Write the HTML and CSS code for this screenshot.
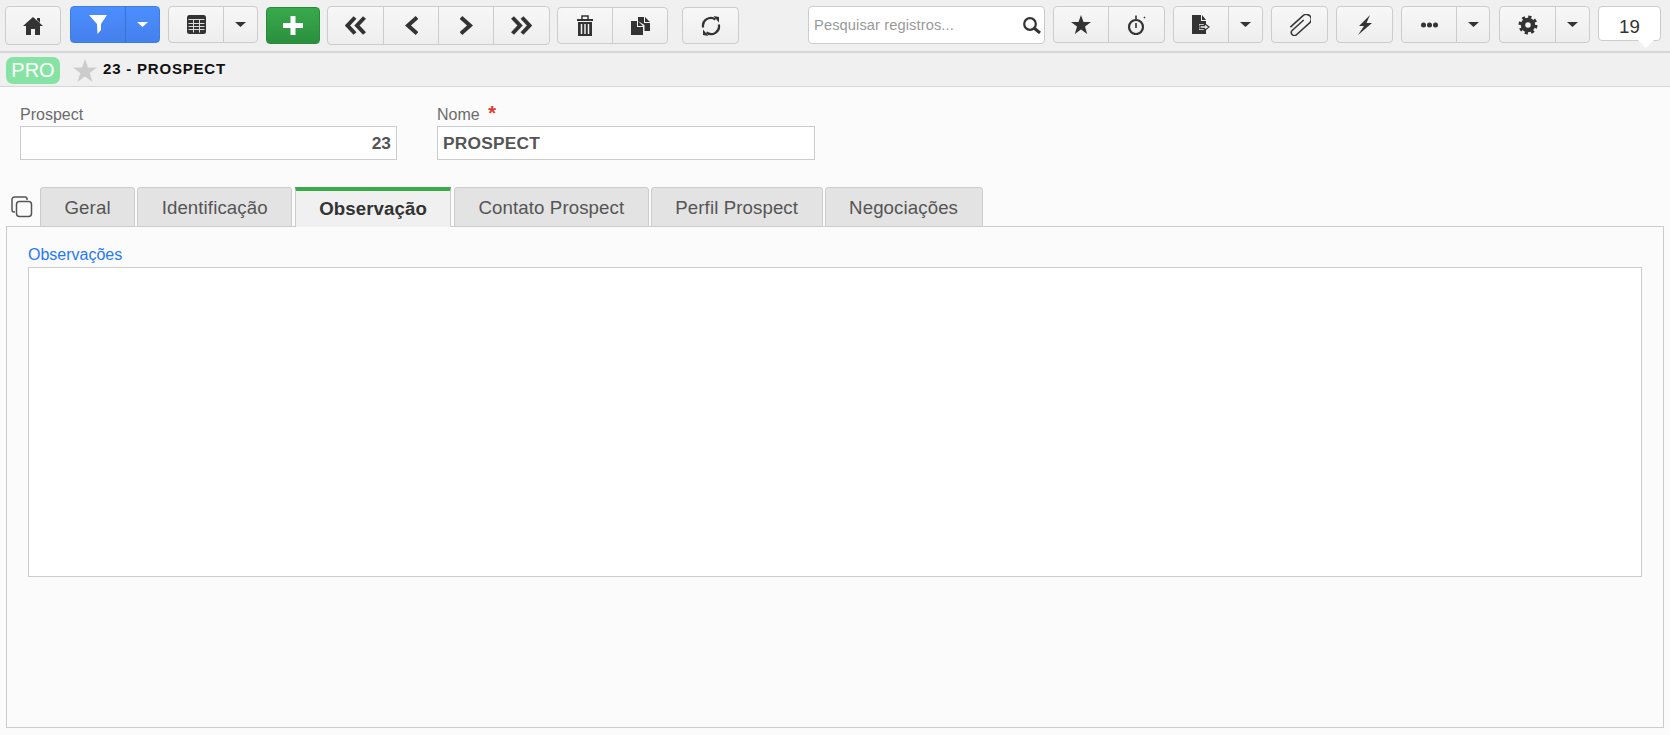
FILE: index.html
```html
<!DOCTYPE html>
<html lang="pt-BR">
<head>
<meta charset="utf-8">
<title>23 - PROSPECT</title>
<link rel="stylesheet" href="styles.css">
</head>
<body>
<header class="toolbar">
  <div class="group tall"><button class="seg w54"><svg width="20" height="18" viewBox="0 0 20 18"><path class="ink" d="M10 0L20 9H17V18H12V12H8V18H3V9H0Z"/><path class="ink" d="M14 1h3v5l-3-3z"/></svg></button></div>
  <div class="group blue g9"><button class="seg w54"><svg width="18" height="19" viewBox="0 0 18 19"><path fill="#fff" d="M0 0H18L12 9V15L8.500 19L8 9Z"/></svg></button><button class="seg w34"><svg width="11" height="5" viewBox="0 0 11 5"><path fill="#fff" d="M0 0H11L5.500 5Z"/></svg></button></div>
  <div class="group"><button class="seg w54"><svg width="19" height="19" viewBox="0 0 19 19"><rect class="ink" width="19" height="19" rx="2.500"/><path stroke="#ddd" fill="none" d="M1.500 4.500H17.500M1.500 8.500H17.500M1.500 11.500H17.500M1.500 14.500H17.500M6.500 4.500V17.500M12.500 4.500V17.500"/></svg></button><button class="seg w34"><svg width="11" height="5" viewBox="0 0 11 5"><path class="ink" d="M0 0H11L5.500 5Z"/></svg></button></div>
  <div class="group green low"><button class="seg w52"><svg width="20" height="19" viewBox="0 0 20 19"><path stroke="#fff" stroke-width="5" d="M10 0V19M0 9.500H20"/></svg></button></div>
  <div class="group tall g7"><button class="seg w55"><svg width="21" height="19" viewBox="0 0 21 19"><path class="line" stroke-width="4" d="M10 1.500L2.500 9.500L10 17.500M19.500 1.500L12 9.500L19.500 17.500"/></svg></button><button class="seg w55"><svg width="13" height="19" viewBox="0 0 13 19"><path class="line" stroke-width="4" d="M12 1.500L3 9.500L12 17.500"/></svg></button><button class="seg w55"><svg width="13" height="19" viewBox="0 0 13 19"><path class="line" stroke-width="4" d="M1 1.500L10 9.500L1 17.500"/></svg></button><button class="seg w56"><svg width="21" height="19" viewBox="0 0 21 19"><path class="line" stroke-width="4" d="M1.500 1.500L9 9.500L1.500 17.500M11 1.500L18.500 9.500L11 17.500"/></svg></button></div>
  <div class="group low g7"><button class="seg w54"><svg width="16" height="21" viewBox="0 0 16 21"><path class="ink" d="M0 4H16V6H0ZM1 7H15V21H1Z"/><path class="line" stroke-width="1.500" d="M5 4V1H11V4"/><path stroke="#eee" stroke-width="1.500" d="M4.500 9V19M8 9V19M11.500 9V19"/></svg></button><button class="seg w55"><svg width="19" height="18" viewBox="0 0 19 18"><path class="ink" d="M7 0H13V6H19V14H13.500V8L7 4ZM14 0L19 5H14ZM0 4H6V10H12V18H0ZM7 4L12 9H7Z"/></svg></button></div>
  <div class="group low g14"><button class="seg w55"><svg width="20" height="20" viewBox="0 0 20 20"><path class="line" stroke-width="2.200" d="M2.200 11.500A7.800 7.800 0 0 1 14.500 3.500M17.800 8.500A7.800 7.800 0 0 1 5.500 16.500"/><path class="ink" d="M12.500 0L18 1V6.500ZM7.500 20L2 19V13.500Z"/></svg></button></div>
  <label class="search"><input class="search-input" type="text" placeholder="Pesquisar registros..."><svg width="18" height="17" viewBox="0 0 18 17"><circle class="line" stroke-width="2.200" cx="7" cy="7" r="5.800"/><path class="line" stroke-width="3" d="M11 11L17 16"/></svg></label>
  <div class="group"><button class="seg w54"><svg width="20" height="19" viewBox="0 0 20 19"><path class="ink" d="M10 0L12.500 7H20L14 11.500L16.200 19L10 14.500L3.800 19L6 11.500L0 7H7.500Z"/></svg></button><button class="seg w56"><svg width="20" height="21" viewBox="0 0 20 21"><circle class="line" stroke-width="2.200" cx="9" cy="13" r="7"/><path class="line" stroke-width="1.600" d="M9 1.500V5M9 9V14M17 3L18 4"/></svg></button></div>
  <div class="group"><button class="seg w54"><svg width="18" height="19" viewBox="0 0 18 19"><path class="ink" d="M0 0H9V6H14V9H7V15H14V19H0ZM10 0L14 5H10Z"/><path fill="none" stroke="#333" stroke-width="1.300" d="M8 10.500H12.500V8.500L17 12L12.500 15.500V13.500H8Z"/></svg></button><button class="seg w34"><svg width="11" height="5" viewBox="0 0 11 5"><path class="ink" d="M0 0H11L5.500 5Z"/></svg></button></div>
  <div class="group"><button class="seg w55"><svg width="22" height="22" viewBox="3 3 18 18"><path class="line" stroke-width="1.200" transform="rotate(48 12 12) translate(2 0)" d="M6 19V5a4 4 0 0 1 8 0V19.500a2.500 2.500 0 0 1-5 0V7"/></svg></button></div>
  <div class="group"><button class="seg w55"><svg width="14" height="20" viewBox="0 0 14 20"><path class="ink" d="M12 0L1 11H6L0 20L14 8H8.500Z"/></svg></button></div>
  <div class="group"><button class="seg w54"><svg width="17" height="6" viewBox="0 0 17 6"><circle class="ink" cx="2.500" cy="3" r="2.500"/><circle class="ink" cx="8.500" cy="3" r="2.500"/><circle class="ink" cx="14.500" cy="3" r="2.500"/></svg></button><button class="seg w33"><svg width="11" height="5" viewBox="0 0 11 5"><path class="ink" d="M0 0H11L5.500 5Z"/></svg></button></div>
  <div class="group g9"><button class="seg w55"><svg width="20" height="20" viewBox="0 0 20 20"><circle class="line" stroke-width="4.500" cx="10" cy="10" r="5"/><circle class="line" stroke-width="3" stroke-dasharray="3.140 3.140" cx="10" cy="10" r="8"/></svg></button><button class="seg w34"><svg width="11" height="5" viewBox="0 0 11 5"><path class="ink" d="M0 0H11L5.500 5Z"/></svg></button></div>
  <div class="counter">19</div>
</header>

<div class="titlebar">
  <span class="badge">PRO</span>
  <svg class="title-star" width="24" height="23" viewBox="0 0 20 19"><path fill="#ccc" d="M10 0L12.500 7H20L14 11.500L16.200 19L10 14.500L3.800 19L6 11.500L0 7H7.500Z"/></svg>
  <span class="title">23 - PROSPECT</span>
</div>

<main class="main">
  <div class="fields">
    <div class="field">
      <label class="field-label">Prospect</label>
      <input class="text-input num" type="text" value="23">
    </div>
    <div class="field">
      <label class="field-label">Nome <span class="req">*</span></label>
      <input class="text-input wide" type="text" value="PROSPECT">
    </div>
  </div>

  <nav class="tabs">
    <svg class="tabs-icon" width="22" height="22" viewBox="0 0 22 22"><rect x="5.500" y="5.500" width="15" height="15" rx="3" fill="none" stroke="#555" stroke-width="1.500"/><path d="M4 16H3A2 2 0 0 1 1 14V3.500A2.500 2.500 0 0 1 3.500 1H14A2 2 0 0 1 16 3V4" fill="none" stroke="#555" stroke-width="1.500"/></svg>
    <div class="tab">Geral</div>
    <div class="tab">Identificação</div>
    <div class="tab active">Observação</div>
    <div class="tab">Contato Prospect</div>
    <div class="tab">Perfil Prospect</div>
    <div class="tab">Negociações</div>
  </nav>

  <section class="panel">
    <label class="panel-label">Observações</label>
    <textarea class="notes"></textarea>
  </section>
</main>
</body>
</html>
```

FILE: styles.css
```css
* { box-sizing: border-box; }
html, body { margin: 0; padding: 0; height: 100%; overflow: hidden; }
body { background: #fbfbfb; font-family: "Liberation Sans", Arial, sans-serif; color: #333; }

.ink { fill: #333; }
.line { fill: none; stroke: #333; }

.toolbar {
  height: 53px;
  padding: 6px 0 0 5px;
  display: flex;
  align-items: flex-start;
  background: #f0f0f0;
  border-bottom: 2px solid #d6d6d6;
}
.group {
  display: flex;
  height: 37px;
  margin-left: 8px;
  border: 1px solid #ccc;
  border-radius: 4px;
  background: linear-gradient(#f7f7f7, #eeeeee);
}
.group:first-child { margin-left: 0; }
.group.tall { height: 39px; }
.group.low { height: 37px; margin-top: 1px; }
.group.g7 { margin-left: 7px; }
.group.g9 { margin-left: 9px; }
.group.g14 { margin-left: 14px; }
.group.blue { background: linear-gradient(#4b8eff, #4580ec); border-color: #3f7de0; }
.group.green { background: linear-gradient(#38aa4c, #2b8f3e); border-color: #2a8a3b; }

.seg {
  padding: 0;
  border: 0;
  background: none;
  display: flex;
  align-items: center;
  justify-content: center;
  border-left: 1px solid #ccc;
}
.seg:first-child { border-left: 0; }
.blue .seg { border-left-color: #3a72d4; }
.w33 { width: 33px; }
.w34 { width: 34px; }
.w52 { width: 52px; }
.w54 { width: 54px; }
.w55 { width: 55px; }
.w56 { width: 56px; }

.search {
  width: 237px;
  height: 38px;
  margin-left: 69px;
  padding: 0 3px 0 5px;
  display: flex;
  align-items: center;
  background: #fff;
  border: 1px solid #ccc;
  border-radius: 4px;
}
.search-input {
  flex: 1;
  min-width: 0;
  border: 0;
  padding: 0;
  outline: 0;
  background: none;
  font: 14.67px "Liberation Sans", Arial, sans-serif;
  letter-spacing: 0.1px;
}
.search-input::placeholder { color: #999; opacity: 1; }

.counter {
  position: relative;
  width: 63px;
  height: 35px;
  margin-left: 8px;
  display: flex;
  align-items: center;
  justify-content: center;
  padding-top: 6px;
  background: #fff;
  border: 1px solid #ccc;
  border-radius: 4px;
  font-size: 18.67px;
}
.counter::after {
  content: "";
  position: absolute;
  left: 39px;
  top: 33px;
  border: 8px solid transparent;
  border-top-color: #fff;
  border-bottom: 0;
}

.titlebar {
  height: 34px;
  padding: 1px 0 0 6px;
  display: flex;
  align-items: center;
  background: #f0f0f0;
  border-bottom: 1px solid #d6d6d6;
}
.badge {
  width: 54px;
  height: 27px;
  display: flex;
  align-items: center;
  justify-content: center;
  background: #86e3a3;
  border-radius: 7px;
  color: #fff;
  font-size: 20px;
}
.title-star { margin-left: 13px; }
.title {
  margin: 0 0 3px 6px;
  font-size: 15px;
  font-weight: bold;
  letter-spacing: 0.8px;
  color: #111;
}

.fields {
  display: flex;
  gap: 40px;
  padding: 19px 0 0 20px;
}
.field { display: flex; flex-direction: column; }
.field-label {
  height: 18px;
  margin-bottom: 2px;
  font-size: 16px;
  line-height: 18px;
  color: #6b6b6b;
}
.req { margin-left: 4px; color: #e0392b; font-size: 20px; font-weight: bold; line-height: 0; }
.text-input {
  width: 377px;
  height: 34px;
  padding: 0 5px;
  background: #fff;
  border: 1px solid #ccc;
  border-radius: 0;
  outline: 0;
  font: bold 17.33px "Liberation Sans", Arial, sans-serif;
  letter-spacing: 0.2px;
  color: #555;
}
.text-input.wide { width: 378px; }
.text-input.num { text-align: right; letter-spacing: 0; }

.tabs {
  display: flex;
  align-items: flex-end;
  height: 40px;
  margin: 27px 0 -1px;
  padding-left: 11px;
}
.tabs-icon { align-self: flex-start; margin: 9px 7px 0 0; }
.tab {
  height: 40px;
  padding: 2px 23.500px 0;
  margin-right: 2px;
  display: flex;
  align-items: center;
  background: #e3e3e3;
  border: 1px solid #ccc;
  border-radius: 3px 3px 0 0;
  font-size: 18.67px;
  letter-spacing: 0.1px;
  color: #555;
  position: relative;
}
.tab.active {
  margin: 0 3px 0 1px;
  padding: 0 23px;
  background: #f0f0f0;
  border-top: 4px solid #3aaa4a;
  border-bottom: 0;
  border-radius: 0;
  font-weight: bold;
  color: #333;
}

.panel {
  width: 1658px;
  height: 502px;
  margin-left: 6px;
  padding: 19px 0 0 21px;
  border: 1px solid #ccc;
  display: flex;
  flex-direction: column;
  align-items: flex-start;
}
.panel-label {
  height: 18px;
  margin-bottom: 3px;
  font-size: 16px;
  line-height: 18px;
  color: #1f78ff;
}
.notes {
  display: block;
  width: 1614px;
  height: 310px;
  padding: 4px;
  background: #fff;
  border: 1px solid #ccc;
  border-radius: 0;
  outline: 0;
  resize: none;
}
```
